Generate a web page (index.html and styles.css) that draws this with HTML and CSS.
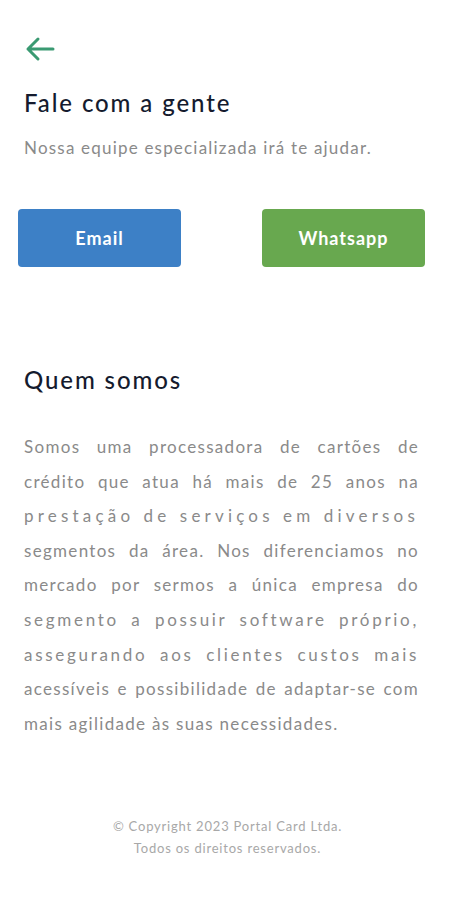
FILE: index.html
```html
<!DOCTYPE html>
<html>
	<head>
		<meta charset="utf-8">
		<link rel="stylesheet" href="styles.css">
	</head>
	<body>
		<div class="page">
			<a class="back" href="#">
				<svg width="30" height="26" viewBox="0 0 30 26">
					<path d="M28 13H3M13 3L3 13l10 10" fill="none" stroke="#3a9a72" stroke-width="3" stroke-linecap="round" stroke-linejoin="round"/>
				</svg>
			</a>
			<h1 class="title">Fale com a gente</h1>
			<p class="subtitle">Nossa equipe especializada irá te ajudar.</p>
			<div class="actions">
				<button class="btn btn-email">Email</button>
				<button class="btn btn-whats">Whatsapp</button>
			</div>
			<h2 class="title about-title">Quem somos</h2>
			<p class="about">
				<span class="line">Somos uma processadora de cartões de</span>
				<span class="line">crédito que atua há mais de 25 anos na</span>
				<span class="line wider">prestação de serviços em diversos</span>
				<span class="line">segmentos da área. Nos diferenciamos no</span>
				<span class="line">mercado por sermos a única empresa do</span>
				<span class="line wide">segmento a possuir software próprio,</span>
				<span class="line wide">assegurando aos clientes custos mais</span>
				<span class="line">acessíveis e possibilidade de adaptar-se com</span>
				<span class="line last">mais agilidade às suas necessidades.</span>
			</p>
			<div class="footer">
				<p>© Copyright 2023 Portal Card Ltda.</p>
				<p>Todos os direitos reservados.</p>
			</div>
		</div>
	</body>
</html>
```

FILE: styles.css
```css
*{
	margin: 0;
	padding: 0;
	box-sizing: border-box;
}
body{
	background-color: #fff;
	font-family: Lato, "Open Sans", sans-serif;
}
.page{
	padding: 36px 24px 40px 24px;
}
.back{
	display: block;
	width: 30px;
	height: 26px;
	margin-left: 1px;
}
.back svg{
	display: block;
}
.title{
	font-size: 24px;
	font-weight: 500;
	color: #151b2e;
	letter-spacing: 1.9px;
	margin-top: 26px;
	line-height: 30px;
}
.subtitle{
	font-size: 17px;
	color: #8a8a8a;
	margin-top: 19px;
	line-height: 22px;
	letter-spacing: 1.2px;
}
.actions{
	display: flex;
	justify-content: space-between;
	margin: 50px 6px 0 -6px;
}
.btn{
	width: 163px;
	height: 58px;
	border: none;
	border-radius: 4px;
	color: #fff;
	font-family: Lato, sans-serif;
	font-size: 18px;
	font-weight: 700;
	letter-spacing: 1px;
}
.btn-email{
	background-color: #3d80c6;
}
.btn-whats{
	background-color: #68a84f;
}
.about-title{
	margin-top: 98px;
}
.about{
	margin: 35px 12px 0 0;
	font-size: 17px;
	line-height: 34.6px;
	color: #8a8a8a;
	letter-spacing: 1.3px;
}
.about .line{
	display: block;
	text-align: justify;
	text-align-last: justify;
	white-space: nowrap;
}
.about .wide{
	letter-spacing: 2.7px;
}
.about .wider{
	letter-spacing: 4.2px;
}
.about .last{
	text-align-last: left;
}
.footer{
	margin-top: 74px;
	text-align: center;
	font-size: 13px;
	line-height: 22px;
	color: #a8a8a8;
	letter-spacing: 0.8px;
}
```
